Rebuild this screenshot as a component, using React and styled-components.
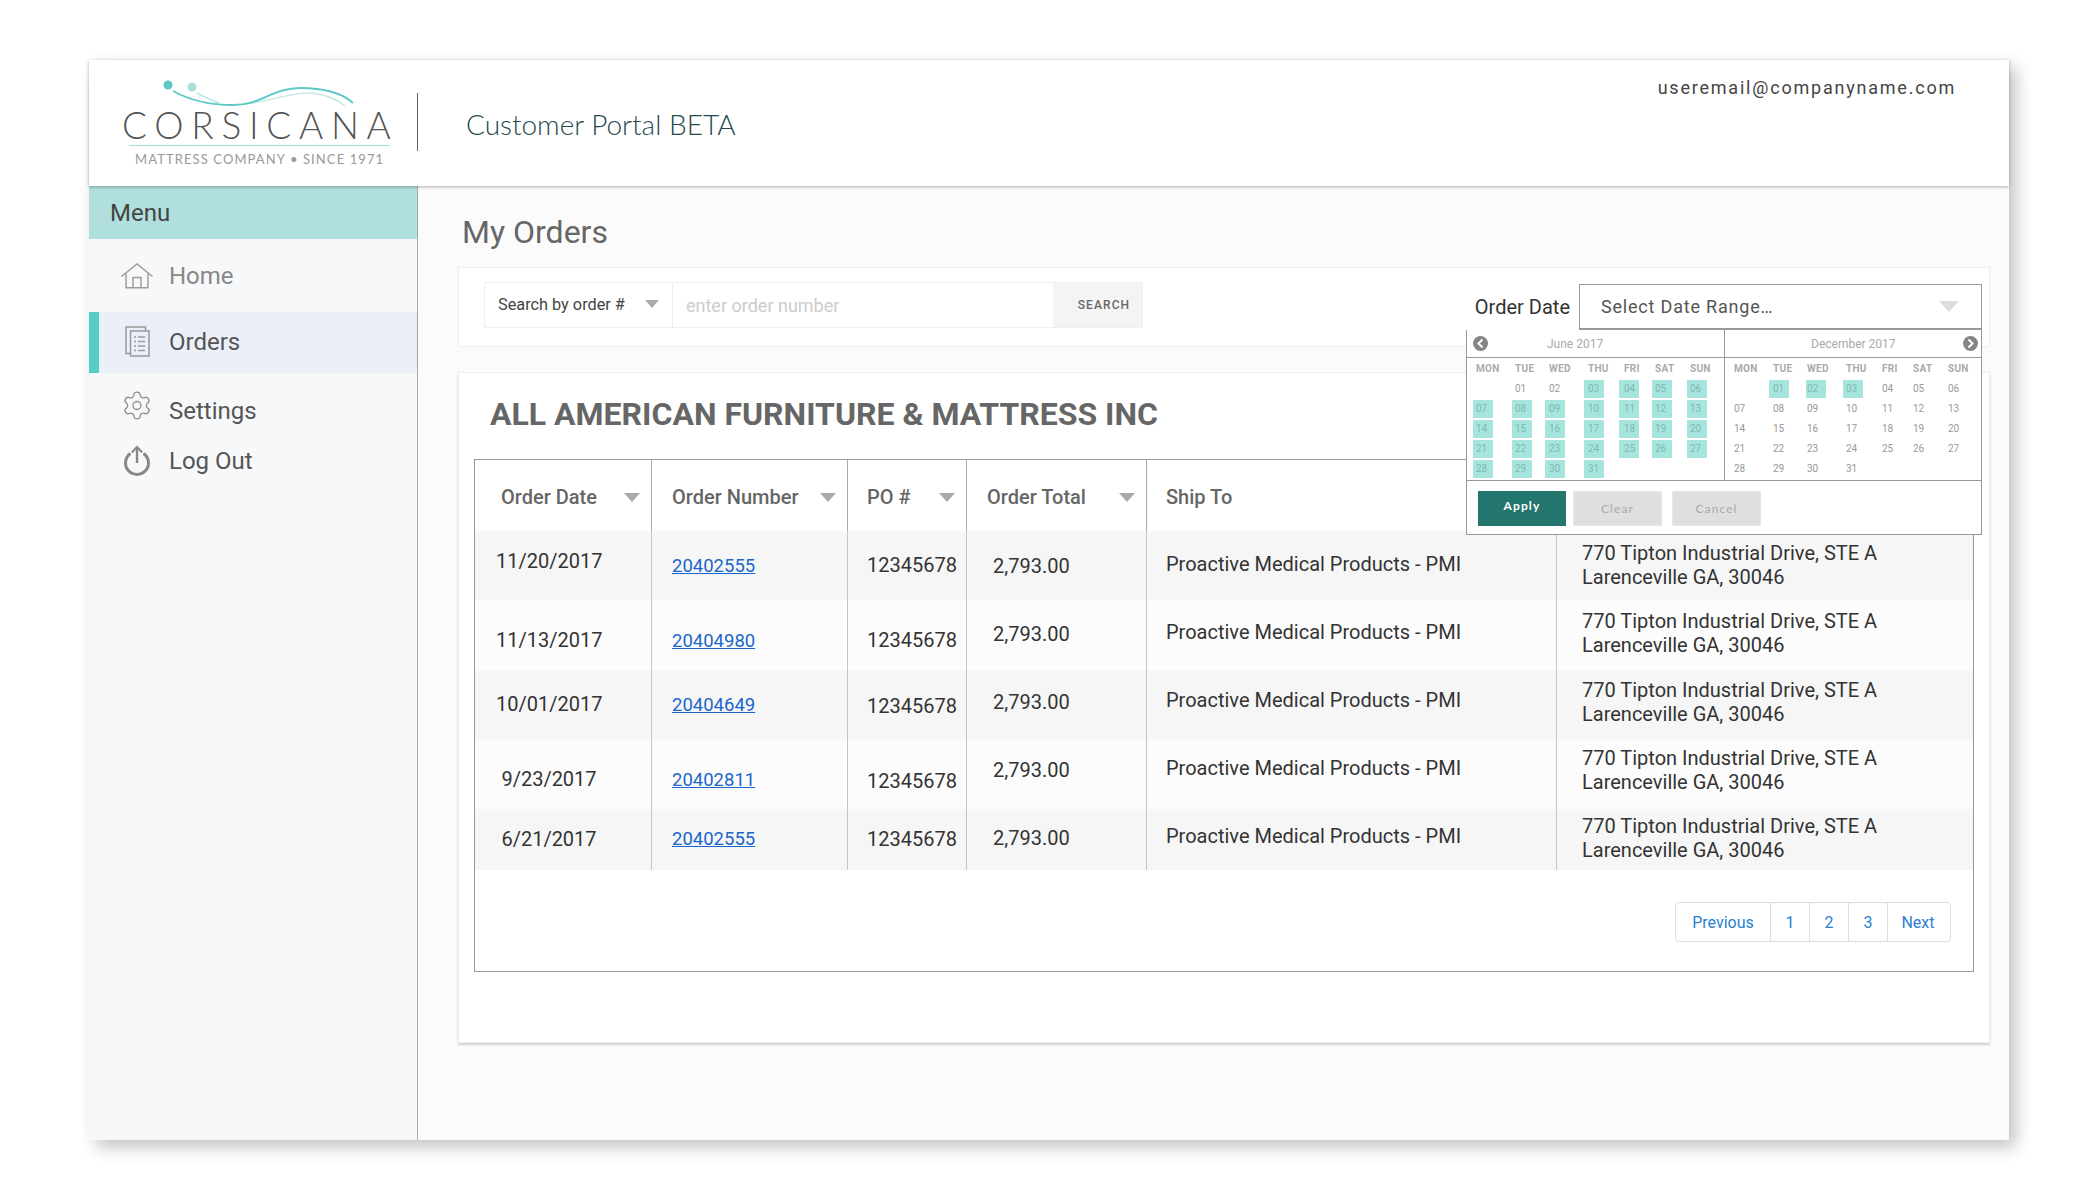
import React from 'react';
import styled, { createGlobalStyle } from 'styled-components';
import { Settings as GearIcon } from 'lucide-react';

const GlobalStyle = createGlobalStyle`
  html, body {
    margin: 0;
    padding: 0;
    background: #fff;
    overflow: hidden;
  }
  * { box-sizing: border-box; }
`;

const Page = styled.div`
  width: 2099px;
  height: 1199px;
  padding: 60px 90px 59px 89px;
  font-family: Roboto, 'Liberation Sans', sans-serif;
`;

const Frame = styled.div`
  display: flex;
  flex-direction: column;
  width: 1920px;
  height: 1080px;
  background: #fbfbfb;
  box-shadow: 7px 7px 16px rgba(0, 0, 0, 0.24);
`;

/* header */
const Header = styled.header`
  position: relative;
  z-index: 2;
  display: flex;
  align-items: flex-start;
  height: 126px;
  flex: none;
  background: #fff;
  box-shadow: 0 1px 3px rgba(0, 0, 0, 0.3);
`;

const Logo = styled.div`
  display: flex;
  flex-direction: column;
  width: 270px;
  margin: 18px 0 0 33px;
`;

const LogoSwoosh = styled.svg`
  display: block;
  width: 270px;
  height: 32px;
`;

const LogoName = styled.div`
  height: 30px;
  font-family: Lato, sans-serif;
  font-weight: 300;
  font-size: 37px;
  line-height: 30px;
  letter-spacing: 7.7px;
  color: #555;
  white-space: nowrap;
`;

const LogoRule = styled.div`
  height: 1px;
  margin: 5px 2px 0 7px;
  background: #a5dfdc;
`;

const LogoTag = styled.div`
  margin: 5px 0 0 13px;
  font-family: Lato, sans-serif;
  font-size: 13px;
  line-height: 16px;
  letter-spacing: 1.1px;
  color: #999;
  white-space: nowrap;
`;

const HeaderRule = styled.div`
  width: 1px;
  height: 58px;
  margin: 33px 0 0 25px;
  background: #666;
`;

const PortalTitle = styled.div`
  margin: 46px 0 0 48px;
  font-family: Lato, sans-serif;
  font-weight: 300;
  font-size: 28px;
  line-height: 36px;
  color: #24494a;
`;

const UserEmail = styled.div`
  margin: 16px 53px 0 auto;
  font-size: 18px;
  line-height: 24px;
  letter-spacing: 1.78px;
  color: #444;
`;

/* sidebar */
const Body = styled.div`
  display: flex;
  flex: 1;
  min-height: 0;
`;

const Sidebar = styled.aside`
  width: 329px;
  flex: none;
  background: #f7f8fa;
  border-right: 1px solid #a8a8a8;
`;

const MenuBand = styled.div`
  display: flex;
  align-items: center;
  height: 53px;
  padding: 1px 0 0 21px;
  background: #b0dfdd;
  font-size: 24px;
  color: #444;
`;

const NavItem = styled.div`
  display: flex;
  align-items: center;
  gap: 16px;
  height: ${p => p.$height}px;
  margin-top: ${p => p.$gap || 0}px;
  padding-left: ${p => (p.$active ? 22 : 32)}px;
  padding-bottom: ${p => (p.$active ? 2 : 0)}px;
  background: ${p => (p.$active ? '#ebf0f8' : 'transparent')};
  border-left: ${p => (p.$active ? '10px solid #55cdc6' : 'none')};
  font-size: 24px;
  color: ${p => p.$color};
`;

const NavIcon = styled.span`
  display: flex;
  justify-content: center;
  width: 32px;
  margin-bottom: ${p => p.$lift || 0}px;
  color: #8f8f8f;
`;

/* main column */
const Main = styled.main`
  flex: 1;
  min-width: 0;
  padding: 28px 19px 0 40px;
`;

const PageTitle = styled.h1`
  margin: 0 0 17px 4px;
  font-size: 32px;
  font-weight: 400;
  line-height: 36px;
  color: #666;
`;

const SearchCard = styled.section`
  display: flex;
  align-items: flex-start;
  height: 80px;
  padding: 14px 7px 0 25px;
  background: #fff;
  border: 1px solid #eee;
`;

const SearchGroup = styled.div`
  display: flex;
  width: 659px;
  height: 46px;
  border: 1px solid #eee;
  border-radius: 2px;
`;

const SearchType = styled.div`
  display: flex;
  align-items: center;
  justify-content: space-between;
  width: 188px;
  padding: 0 13px 2px 13px;
  border-right: 1px solid #eee;
  font-size: 16.3px;
  color: #444;
`;

const Caret = styled.span`
  display: inline-block;
  flex: none;
  width: 0;
  height: 0;
  border-left: ${p => p.$size / 2}px solid transparent;
  border-right: ${p => p.$size / 2}px solid transparent;
  border-top: ${p => Math.round(p.$size * 0.56)}px solid ${p => p.$color || '#aaa'};
`;

const SearchInput = styled.input`
  flex: 1;
  min-width: 0;
  padding: 0 13px;
  border: 0;
  outline: 0;
  background: #fff;
  font-family: inherit;
  font-size: 18px;
  &::placeholder { color: #ccc; opacity: 1; }
`;

const SearchButton = styled.button`
  width: 89px;
  padding: 0 0 0 13px;
  border: 0;
  background: #f4f4f4;
  font-family: inherit;
  font-size: 12px;
  font-weight: 500;
  letter-spacing: 1.1px;
  color: #666;
`;

const DateLabel = styled.div`
  margin: 13px 9px 0 auto;
  font-size: 20px;
  line-height: 24px;
  color: #333;
`;

const DateSelect = styled.div`
  position: relative;
  display: flex;
  align-items: center;
  justify-content: space-between;
  width: 403px;
  height: 46px;
  margin-top: 2px;
  padding: 0 22px 0 21px;
  background: #fff;
  border: 1px solid #999;
  border-bottom-width: 2px;
  font-size: 18px;
  letter-spacing: 0.8px;
  color: #555;
`;

/* date range popover */
const Popover = styled.div`
  position: absolute;
  z-index: 3;
  top: calc(100% + 2px);
  right: -1px;
  width: 516px;
  background: #fff;
  border: 1px solid #999;
  border-top: 0;
  letter-spacing: 0;
`;

const Months = styled.div`
  display: flex;
  border-bottom: 1px solid #999;
`;

const MonthPanel = styled.div`
  width: ${p => p.$width}px;
  border-right: ${p => (p.$divided ? '1px solid #999' : '0')};
`;

const MonthBar = styled.div`
  display: flex;
  align-items: center;
  height: 28px;
  padding: 0 3px 0 6px;
  border-bottom: 1px solid #999;
`;

const MonthName = styled.span`
  margin-left: ${p => p.$offset}px;
  font-size: 12px;
  color: #aaa;
`;

const NavDisc = styled.svg`
  display: block;
  flex: none;
  width: 15px;
  height: 15px;
  margin-left: ${p => (p.$end ? 'auto' : '0')};
`;

const DayGrid = styled.div`
  display: grid;
  grid-template-columns: 39px 34px 39px 36px 31px 35px 1fr;
  grid-template-rows: 21px;
  grid-auto-rows: 20px;
  padding: 0 0 1px ${p => p.$inset}px;
`;

const Weekday = styled.div`
  align-self: center;
  font-size: 10px;
  font-weight: 700;
  letter-spacing: 0.3px;
  color: #aaa;
`;

const Day = styled.div`
  align-self: start;
  width: 20px;
  height: 18px;
  margin-left: ${p => -p.$lead}px;
  padding-left: ${p => p.$lead}px;
  margin-top: 1px;
  background: ${p => (p.$on ? '#a6e5dd' : 'transparent')};
  font-size: 10px;
  line-height: 18px;
  color: ${p => (p.$on ? '#7fb8b2' : '#999')};
`;

const PopoverActions = styled.div`
  display: flex;
  gap: 7px;
  height: 53px;
  padding: 10px 0 0 11px;
`;

const RangeButton = styled.button`
  width: ${p => (p.$primary ? 88 : 89)}px;
  height: 35px;
  margin-left: ${p => p.$nudge || 0}px;
  padding: 0 0 ${p => (p.$primary ? 7 : 0)}px;
  background: ${p => (p.$primary ? '#23766e' : '#dfdfdf')};
  border: 1px solid ${p => (p.$primary ? '#23766e' : '#e8e8e8')};
  font-family: Lato, sans-serif;
  font-size: 12px;
  font-weight: ${p => (p.$primary ? 700 : 400)};
  letter-spacing: 1.1px;
  color: ${p => (p.$primary ? '#fff' : '#aaa')};
`;

/* orders */
const OrdersCard = styled.section`
  height: 671px;
  margin-top: 25px;
  padding: 21px 15px 0 15px;
  background: #fff;
  border: 1px solid #eee;
  box-shadow: 0 2px 2px rgba(0, 0, 0, 0.16);
`;

const Customer = styled.h2`
  margin: 0 0 25px 16px;
  font-size: 32px;
  font-weight: 700;
  line-height: 40px;
  color: #666;
  white-space: nowrap;
`;

const TableBox = styled.div`
  display: flex;
  flex-direction: column;
  height: 513px;
  border: 1px solid #999;
`;

const HeadRow = styled.div`
  display: grid;
  grid-template-columns: 176px 196px 119px 180px 1fr;
  height: 71px;
`;

const HeadCell = styled.div`
  display: flex;
  align-items: center;
  justify-content: space-between;
  padding: 3px 11px 0 ${p => p.$inset}px;
  border-left: ${p => (p.$first ? '0' : '1px solid #aaa')};
  font-size: 20px;
  font-weight: 500;
  color: #666;
`;

const Row = styled.div`
  display: grid;
  grid-template-columns: 176px 196px 119px 180px 410px 1fr;
  height: ${p => p.$height}px;
  background: ${p => (p.$shade ? '#f6f6f6' : '#fcfcfc')};
`;

const Cell = styled.div`
  padding: ${p => p.$top}px 0 0 ${p => p.$inset}px;
  border-left: ${p => (p.$first ? '0' : '1px solid #c4c4c4')};
  font-size: 20px;
  line-height: 24px;
  color: #333;
  white-space: nowrap;
`;

const DateText = styled.span`
  display: block;
  width: 106px;
  text-align: center;
`;

const OrderLink = styled.a`
  font-size: 18.5px;
  color: #1a66cc;
  text-decoration: underline;
`;

const Pager = styled.nav`
  display: flex;
  align-self: flex-end;
  height: 40px;
  margin: 32px 22px 0 0;
  border: 1px solid #ddd;
  border-radius: 4px;
`;

const PageLink = styled.a`
  display: flex;
  align-items: center;
  justify-content: center;
  width: ${p => p.$width}px;
  padding-right: ${p => p.$tuck || 0}px;
  border-left: ${p => (p.$first ? '0' : '1px solid #ddd')};
  font-size: 16px;
  color: #2a7fd5;
`;

const HomeGlyph = () => (
  <svg width="32" height="26" viewBox="0 0 32 26" fill="none" stroke="#9a9a9a" strokeWidth="1.4">
    <path d="M.5 13.5 16 1 31.5 13.5" />
    <path d="M5 10.5V24.8H27V10.5" />
    <path d="M12 24.8V14.5H20V24.8" />
  </svg>
);

const OrdersGlyph = () => (
  <svg width="25" height="31" viewBox="0 0 25 31" fill="none" stroke="#999" strokeWidth="1.5">
    <path d="M5 27.5H1V1H20.5V5" />
    <rect x="5.5" y="5" width="18.5" height="25" />
    <path d="M9 11h2M13 11h7M9 15.5h2M13 15.5h7M9 20h2M13 20h7M9 24.5h2M13 24.5h7" />
  </svg>
);

const PowerGlyph = () => (
  <svg width="28" height="32" viewBox="0 0 28 32" fill="none" stroke="#888">
    <path d="M7.5 8.5a11.5 11.5 0 1 0 13 0" strokeWidth="3" />
    <path d="M14 18V2.5" strokeWidth="2.4" />
    <path d="M8.8 7.5 14 2l5.2 5.5" strokeWidth="2" />
  </svg>
);

const NavArrow = ({ end }) => (
  <NavDisc $end={end} viewBox="0 0 15 15">
    <circle cx="7.5" cy="7.5" r="7.5" fill="#858585" />
    <polyline
      points={end ? '5.5,3.5 9.5,7.5 5.5,11.5' : '9.5,3.5 5.5,7.5 9.5,11.5'}
      fill="none"
      stroke="#fff"
      strokeWidth="2"
    />
  </NavDisc>
);

const weekdays = ['MON', 'TUE', 'WED', 'THU', 'FRI', 'SAT', 'SUN'];

const Month = ({ name, offset, inset, width, divided, end, leads, isOn }) => {
  const cells = [<div key="blank" />];
  for (let d = 1; d <= 31; d++) {
    cells.push(
      <Day key={d} $on={isOn(d)} $lead={leads[d % 7]}>
        {String(d).padStart(2, '0')}
      </Day>
    );
  }
  return (
    <MonthPanel $width={width} $divided={divided}>
      <MonthBar>
        {!end && <NavArrow />}
        <MonthName $offset={offset}>{name}</MonthName>
        {end && <NavArrow end />}
      </MonthBar>
      <DayGrid $inset={inset}>
        {weekdays.map(w => (
          <Weekday key={w}>{w}</Weekday>
        ))}
        {cells}
      </DayGrid>
    </MonthPanel>
  );
};

// t = top padding of each cell, the rows in the mockup are not aligned
const orders = [
  { date: '11/20/2017', link: '20402555', h: 69, t: [18, 22, 22, 23, 21, 10] },
  { date: '11/13/2017', link: '20404980', h: 70, t: [28, 28, 28, 22, 20, 9] },
  { date: '10/01/2017', link: '20404649', h: 69, t: [22, 22, 24, 20, 18, 8] },
  { date: '9/23/2017', link: '20402811', h: 70, t: [28, 28, 30, 19, 17, 7] },
  { date: '6/21/2017', link: '20402555', h: 61, t: [18, 17, 18, 17, 15, 5] },
];

const heads = [
  { label: 'Order Date', inset: 26 },
  { label: 'Order Number', inset: 20 },
  { label: 'PO #', inset: 19 },
  { label: 'Order Total', inset: 20 },
];

export default function App() {
  return (
    <Page>
      <GlobalStyle />
      <Frame>
        <Header>
          <Logo>
            <LogoSwoosh viewBox="0 0 270 32" fill="none">
              <circle cx="46" cy="7" r="4.5" fill="#5cc8c3" />
              <circle cx="70" cy="9" r="4.5" fill="#aadfdb" />
              <path d="M75 15C82 19 89 22 97 25" stroke="#bfe7e3" strokeWidth="1.5" />
              <path d="M111 27C140 27 170 13 190 15C205 17 216 22 223 28" stroke="#bfe7e3" strokeWidth="1.3" />
              <path d="M51 13C60 18 80 27 111 27C140 27 150 10 178 10C200 10 220 15 231 25" stroke="#5cc8c3" strokeWidth="1.8" />
            </LogoSwoosh>
            <LogoName>CORSICANA</LogoName>
            <LogoRule />
            <LogoTag>MATTRESS COMPANY • SINCE 1971</LogoTag>
          </Logo>
          <HeaderRule />
          <PortalTitle>Customer Portal BETA</PortalTitle>
          <UserEmail>useremail@companyname.com</UserEmail>
        </Header>
        <Body>
          <Sidebar>
            <MenuBand>Menu</MenuBand>
            <NavItem $height={73} $color="#888">
              <NavIcon><HomeGlyph /></NavIcon>
              Home
            </NavItem>
            <NavItem $height={61} $color="#555" $active>
              <NavIcon><OrdersGlyph /></NavIcon>
              Orders
            </NavItem>
            <NavItem $height={50} $gap={13} $color="#555">
              <NavIcon $lift={12}><GearIcon size={35} strokeWidth={1} /></NavIcon>
              Settings
            </NavItem>
            <NavItem $height={50} $color="#555">
              <NavIcon><PowerGlyph /></NavIcon>
              Log Out
            </NavItem>
          </Sidebar>
          <Main>
            <PageTitle>My Orders</PageTitle>
            <SearchCard>
              <SearchGroup>
                <SearchType>
                  Search by order #
                  <Caret $size={14} />
                </SearchType>
                <SearchInput placeholder="enter order number" readOnly />
                <SearchButton>SEARCH</SearchButton>
              </SearchGroup>
              <DateLabel>Order Date</DateLabel>
              <DateSelect>
                Select Date Range…
                <Caret $size={20} $color="#ddd" />
                <Popover>
                  <Months>
                    <Month
                      name="June 2017"
                      offset={59}
                      inset={9}
                      width={258}
                      divided
                      leads={[3, 3, 4, 4, 5, 3, 3]}
                      isOn={d => d >= 3}
                    />
                    <Month
                      name="December 2017"
                      offset={80}
                      inset={9}
                      width={256}
                      end
                      leads={[0, 4, 1, 3, 0, 0, 0]}
                      isOn={d => d <= 3}
                    />
                  </Months>
                  <PopoverActions>
                    <RangeButton $primary>Apply</RangeButton>
                    <RangeButton>Clear</RangeButton>
                    <RangeButton $nudge={3}>Cancel</RangeButton>
                  </PopoverActions>
                </Popover>
              </DateSelect>
            </SearchCard>
            <OrdersCard>
              <Customer>ALL AMERICAN FURNITURE &amp; MATTRESS INC</Customer>
              <TableBox>
                <HeadRow>
                  {heads.map((h, i) => (
                    <HeadCell key={h.label} $inset={h.inset} $first={i === 0}>
                      {h.label}
                      <Caret $size={16} />
                    </HeadCell>
                  ))}
                  <HeadCell $inset={19}>Ship To</HeadCell>
                </HeadRow>
                {orders.map((o, i) => (
                  <Row key={i} $height={o.h} $shade={i % 2 === 0}>
                    <Cell $first $top={o.t[0]} $inset={21}>
                      <DateText>{o.date}</DateText>
                    </Cell>
                    <Cell $top={o.t[1]} $inset={20}>
                      <OrderLink href="#">{o.link}</OrderLink>
                    </Cell>
                    <Cell $top={o.t[2]} $inset={19}>12345678</Cell>
                    <Cell $top={o.t[3]} $inset={26}>2,793.00</Cell>
                    <Cell $top={o.t[4]} $inset={19}>Proactive Medical Products - PMI</Cell>
                    <Cell $top={o.t[5]} $inset={25}>
                      770 Tipton Industrial Drive, STE A
                      <br />
                      Larenceville GA, 30046
                    </Cell>
                  </Row>
                ))}
                <Pager>
                  <PageLink $first $width={94}>Previous</PageLink>
                  <PageLink $width={39}>1</PageLink>
                  <PageLink $width={39}>2</PageLink>
                  <PageLink $width={39}>3</PageLink>
                  <PageLink $width={63} $tuck={2}>Next</PageLink>
                </Pager>
              </TableBox>
            </OrdersCard>
          </Main>
        </Body>
      </Frame>
    </Page>
  );
}
